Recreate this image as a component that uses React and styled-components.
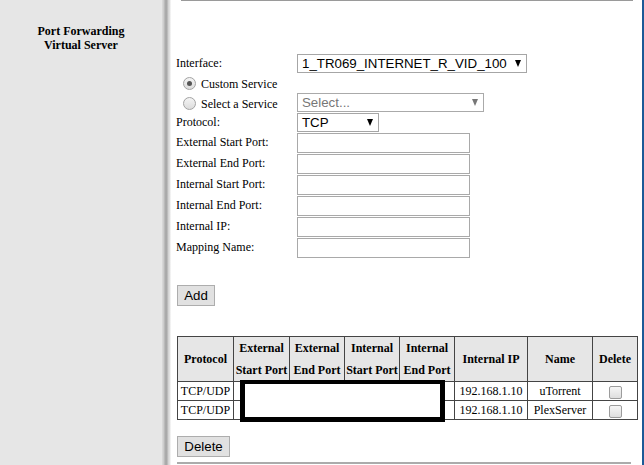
import React from 'react'
import styled, { createGlobalStyle } from 'styled-components'

const GlobalStyle = createGlobalStyle`
  html, body {
    margin: 0;
    padding: 0;
    background: #fff;
    overflow: hidden;
  }
  body {
    font-family: "Liberation Serif", "Times New Roman", serif;
    font-size: 12px;
    color: #000;
  }
`

const Page = styled.div`
  display: flex;
  width: 644px;
  height: 465px;
`

const Sidebar = styled.div`
  width: 162px;
  flex-shrink: 0;
  background: #e6e6e6;
  padding-top: 24px;
  text-align: center;
  font-weight: bold;
  font-size: 12px;
  line-height: 14px;
`

const Divider = styled.div`
  width: 9px;
  flex-shrink: 0;
  background: linear-gradient(
    to right,
    #dcdcdc 0px,
    #c8c8c8 2px,
    #acacac 3px,
    #a8a8a8 5px,
    #cfcfcf 6px,
    #e4e4e4 8px,
    #fff 9px
  );
`

const Main = styled.div`
  flex: 1;
  border-right: 2px solid #1c5a97;
  padding: 0 5px;
  display: flex;
  flex-direction: column;
`

const TopRule = styled.div`
  margin: 0 4px 0 5px;
  height: 1px;
  background: #9a9a9a;
`

const Form = styled.div`
  margin-top: 53px;
  display: flex;
  flex-direction: column;
`

const Row = styled.div`
  display: flex;
  align-items: center;
  height: ${(p) => p.$h || 21}px;
  margin-top: ${(p) => p.$mt || 0}px;
`

const Label = styled.div`
  width: 121px;
  flex-shrink: 0;
  white-space: nowrap;
`

const RadioLabel = styled.label`
  display: flex;
  align-items: center;
  width: 121px;
  flex-shrink: 0;
  padding: 3px 0 0 7px;
  box-sizing: border-box;
  gap: 5px;
  white-space: nowrap;
`

const Radio = styled.span`
  width: 11px;
  height: 11px;
  border-radius: 50%;
  border: 1px solid #a3a3a3;
  background: linear-gradient(#f4f4f4, #dcdcdc);
  display: inline-flex;
  align-items: center;
  justify-content: center;
  margin-top: -2px;
  &::after {
    content: '';
    width: 5px;
    height: 5px;
    border-radius: 50%;
    background: ${(p) => (p.$checked ? '#555' : 'transparent')};
  }
`

const SelectBox = styled.div`
  width: ${(p) => p.$w}px;
  height: 19px;
  box-sizing: border-box;
  border: 1px solid ${(p) => (p.$muted ? '#aaa' : '#a6a6a6')};
  background: #fff;
  display: flex;
  align-items: center;
  justify-content: space-between;
  padding: 0 5px 0 4px;
  font-family: "Liberation Sans", Arial, sans-serif;
  font-size: 13.3px;
  color: ${(p) => (p.$muted ? '#777' : '#000')};
`

const Arrow = styled.span`
  width: 0;
  height: 0;
  border-left: 3.5px solid transparent;
  border-right: 3.5px solid transparent;
  border-top: 7px solid ${(p) => (p.$muted ? '#777' : '#000')};
`

const TextInput = styled.input`
  width: 173px;
  height: 20px;
  box-sizing: border-box;
  border: 1px solid #a9a9a9;
  margin: 0;
  padding: 0 2px;
  outline: none;
`

const Button = styled.button`
  width: ${(p) => p.$w}px;
  height: 21px;
  box-sizing: border-box;
  border: 1px solid #adadad;
  background: #e1e1e1;
  font-family: "Liberation Sans", Arial, sans-serif;
  font-size: 13.3px;
  padding: 0;
  margin-left: 1px;
  color: #000;
`

const AddButton = styled(Button)`
  margin-top: 27px;
`

const DeleteButton = styled(Button)`
  margin-top: 16px;
`

const TableWrap = styled.div`
  position: relative;
  margin-top: 30px;
  margin-left: 1px;
  width: 460px;
`

const Table = styled.table`
  border-collapse: collapse;
  width: 460px;
  table-layout: fixed;
  border: 1px solid #000;
`

const Th = styled.th`
  background: #e6e6e6;
  border: 1px solid #444;
  font-weight: bold;
  font-size: 12px;
  line-height: 22px;
  height: 43px;
  padding: 0;
  text-align: center;
  white-space: nowrap;
`

const Td = styled.td`
  border: 1px solid #444;
  height: 18px;
  padding: 0;
  text-align: center;
  white-space: nowrap;
  line-height: 18px;
`

const Checkbox = styled.span`
  display: inline-block;
  width: 11px;
  height: 11px;
  border: 1px solid #9c9c9c;
  border-radius: 2px;
  background: linear-gradient(#f6f6f6, #dedede);
  vertical-align: middle;
`

const Redaction = styled.div`
  position: absolute;
  left: 63px;
  top: 44px;
  width: 205px;
  height: 42px;
  box-sizing: border-box;
  border: 5px solid #000;
  border-top-width: 4px;
  background: #fff;
`

const BottomRule = styled.div`
  margin: 5px 6px 0 1px;
  height: 2px;
  background: #ababab;
`

const columns = [
  { w: 56, t: ['Protocol'] },
  { w: 56, t: ['External', 'Start Port'] },
  { w: 55, t: ['External', 'End Port'] },
  { w: 55, t: ['Internal', 'Start Port'] },
  { w: 55, t: ['Internal', 'End Port'] },
  { w: 73, t: ['Internal IP'] },
  { w: 65, t: ['Name'] },
  { w: 45, t: ['Delete'] },
]

const rules = [
  { proto: 'TCP/UDP', ip: '192.168.1.10', name: 'uTorrent' },
  { proto: 'TCP/UDP', ip: '192.168.1.10', name: 'PlexServer' },
]

const portFields = [
  'External Start Port:',
  'External End Port:',
  'Internal Start Port:',
  'Internal End Port:',
  'Internal IP:',
  'Mapping Name:',
]

export default function App() {
  return (
    <Page>
      <GlobalStyle />
      <Sidebar>
        Port Forwarding
        <br />
        Virtual Server
      </Sidebar>
      <Divider />
      <Main>
        <TopRule />
        <Form>
          <Row $h={19}>
            <Label>Interface:</Label>
            <SelectBox $w={230}>
              1_TR069_INTERNET_R_VID_100 <Arrow />
            </SelectBox>
          </Row>
          <Row $h={20}>
            <RadioLabel>
              <Radio $checked />
              Custom Service
            </RadioLabel>
          </Row>
          <Row $h={19}>
            <RadioLabel>
              <Radio />
              Select a Service
            </RadioLabel>
            <SelectBox $w={187} $muted>
              Select... <Arrow $muted />
            </SelectBox>
          </Row>
          <Row $h={19} $mt={1}>
            <Label>Protocol:</Label>
            <SelectBox $w={82}>
              TCP <Arrow />
            </SelectBox>
          </Row>
          {portFields.map((f) => (
            <Row key={f} $h={21}>
              <Label>{f}</Label>
              <TextInput />
            </Row>
          ))}
        </Form>
        <div>
          <AddButton $w={38}>Add</AddButton>
        </div>
        <TableWrap>
          <Table>
            <colgroup>
              {columns.map((c, i) => (
                <col key={i} style={{ width: c.w }} />
              ))}
            </colgroup>
            <thead>
              <tr>
                {columns.map((c, i) => (
                  <Th key={i}>
                    {c.t.map((line, j) => (
                      <div key={j}>{line}</div>
                    ))}
                  </Th>
                ))}
              </tr>
            </thead>
            <tbody>
              {rules.map((r) => (
                <tr key={r.name}>
                  <Td>{r.proto}</Td>
                  <Td />
                  <Td />
                  <Td />
                  <Td />
                  <Td>{r.ip}</Td>
                  <Td>{r.name}</Td>
                  <Td>
                    <Checkbox />
                  </Td>
                </tr>
              ))}
            </tbody>
          </Table>
          <Redaction />
        </TableWrap>
        <div>
          <DeleteButton $w={53}>Delete</DeleteButton>
        </div>
        <BottomRule />
      </Main>
    </Page>
  )
}
